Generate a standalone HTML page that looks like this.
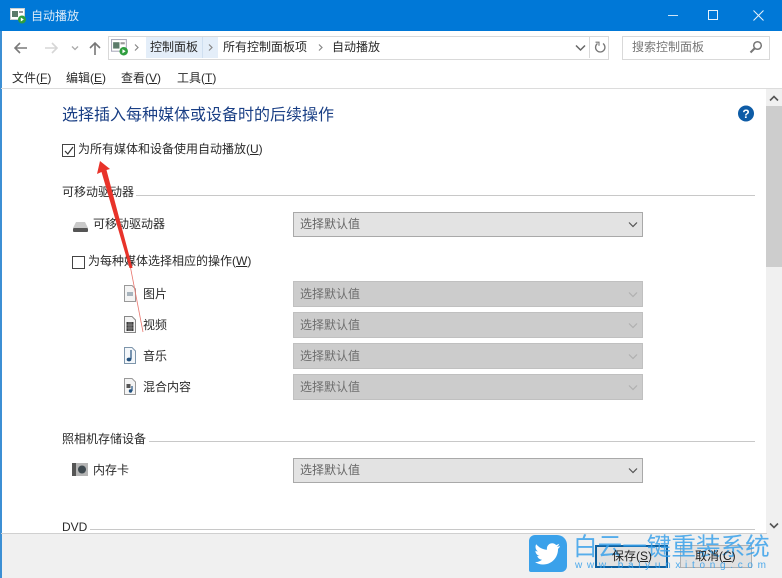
<!DOCTYPE html>
<html lang="zh">
<head>
<meta charset="utf-8">
<style>
html,body{margin:0;padding:0;background:#fff}
#r{position:relative;width:782px;height:578px;overflow:hidden;background:#fff;font-family:"Liberation Sans","Noto Sans CJK SC",sans-serif;font-size:12px;color:#2a2a2a}
#r div,#r span.a,#r svg{position:absolute}
.t{white-space:nowrap;line-height:16px}
.u{text-decoration:underline}
.sel{left:293px;width:348px;border:1px solid #a9a9a9;background:#e3e3e3;color:#666;height:23px;line-height:23px;text-indent:6px}
.dis{background:#cccccc;border-color:#c0c0c0;color:#6d6d6d;height:24px;line-height:24px}
.hr{height:1px;background:#c8c8c8}
</style>
</head>
<body>
<div id="r">
<div style="left:0;top:0;width:782px;height:31px;background:#0078d7"></div>
<div style="left:0;top:31px;width:1.5px;height:547px;background:#3c8fd4"></div>
<svg style="left:10px;top:8px" width="17" height="16" viewBox="0 0 17 16"><rect x="0.5" y="0.5" width="14" height="11" fill="#fff" stroke="#c8d0d0"/><rect x="2" y="3" width="6" height="6" fill="#5a7a6a"/><rect x="9" y="3" width="4" height="2" fill="#999"/><circle cx="12" cy="11.5" r="4" fill="#2f9e3f"/><path d="M10.8 9.5l3 2-3 2z" fill="#fff"/></svg>
<div class="t" style="left:31px;top:8px;color:#dcebf8;font-size:12px">自动播放</div>
<div style="left:668px;top:15px;width:10px;height:1px;background:#cfe4f6"></div>
<div style="left:708px;top:10px;width:8px;height:8px;border:1px solid #e6f1fa"></div>
<svg style="left:753px;top:10px" width="11" height="11"><path d="M0.5 0.5L10.5 10.5M10.5 0.5L0.5 10.5" stroke="#e6f1fa" stroke-width="1"/></svg>

<svg style="left:14px;top:40px" width="100" height="16" viewBox="0 0 100 16" fill="none"><path d="M1 8H13M6 3L1 8L6 13" stroke="#7a7a7a" stroke-width="1.6"/><path d="M31 8H43M38 3L43 8L38 13" stroke="#d6d6d6" stroke-width="1.6"/><path d="M58 6.5L61 9.5L64 6.5" stroke="#aaa" stroke-width="1.3"/><path d="M81 15V3M76 8L81 3L86 8" stroke="#777" stroke-width="1.6"/></svg>

<div style="left:108px;top:36px;width:111px;height:22px;border:1px solid #d9d9d9;border-right:0"></div>
<div style="left:146px;top:37px;width:72px;height:21px;background:#e4eef9"></div>
<div style="left:202px;top:37px;width:1px;height:21px;background:#cfdff0"></div>
<div style="left:219px;top:36px;width:389px;height:22px;border:1px solid #d9d9d9;border-left:0"></div>
<div style="left:589px;top:36px;width:1px;height:22px;background:#d9d9d9"></div>
<svg style="left:111px;top:39px" width="18" height="17" viewBox="0 0 17 16"><rect x="0.5" y="0.5" width="14" height="11" fill="#fff" stroke="#aab"/><rect x="2" y="3" width="6" height="6" fill="#5a7a6a"/><rect x="9" y="3" width="4" height="2" fill="#999"/><circle cx="12" cy="11.5" r="4" fill="#2f9e3f"/><path d="M10.8 9.5l3 2-3 2z" fill="#fff"/></svg>
<svg style="left:134px;top:43px" width="190" height="9" fill="none" stroke="#888" stroke-width="1.2"><path d="M1 1.5L4 4.5L1 7.5"/><path d="M75 1.5L78 4.5L75 7.5"/><path d="M185 1.5L188 4.5L185 7.5"/></svg>
<div class="t" style="left:150px;top:39px">控制面板</div>
<div class="t" style="left:223px;top:39px">所有控制面板项</div>
<div class="t" style="left:332px;top:39px">自动播放</div>
<svg style="left:575px;top:44px" width="11" height="8" fill="none"><path d="M1 1.5L5.5 6L10 1.5" stroke="#666" stroke-width="1.5"/></svg>
<svg style="left:594px;top:41px" width="13" height="13" viewBox="0 0 13 13" fill="none"><path d="M3.5 2.5A4.7 4.7 0 1 0 9 2.5" stroke="#777" stroke-width="1.3"/><path d="M1.5 1.2H5V4.8" stroke="#777" stroke-width="1.1"/></svg>
<div style="left:622px;top:36px;width:146px;height:22px;border:1px solid #d9d9d9"></div>
<div class="t" style="left:632px;top:39px;color:#777">搜索控制面板</div>
<svg style="left:749px;top:40px" width="14" height="14" fill="none"><circle cx="8.5" cy="5.5" r="3.8" stroke="#777" stroke-width="1.5"/><path d="M6 8L1.5 12.5" stroke="#777" stroke-width="2"/></svg>

<div class="t" style="left:12px;top:70px">文件(<span class="u">F</span>)</div>
<div class="t" style="left:66px;top:70px">编辑(<span class="u">E</span>)</div>
<div class="t" style="left:121px;top:70px">查看(<span class="u">V</span>)</div>
<div class="t" style="left:177px;top:70px">工具(<span class="u">T</span>)</div>
<div class="hr" style="left:1px;top:88px;width:781px;background:#dcdcdc"></div>

<div class="t" style="left:62px;top:106px;font-size:16px;line-height:20px;color:#1a3f85">选择插入每种媒体或设备时的后续操作</div>
<svg style="left:738px;top:105px" width="16" height="17"><circle cx="8" cy="8.5" r="8" fill="#0e5ca6"/><text x="8" y="13" text-anchor="middle" font-family="Liberation Sans" font-weight="700" font-size="12" fill="#fff">?</text></svg>

<div style="left:62px;top:144px;width:11px;height:11px;border:1px solid #444;background:#fff"></div>
<svg style="left:63px;top:145px" width="12" height="12" fill="none"><path d="M2 6L4.8 9L10 2" stroke="#333" stroke-width="1.2"/></svg>
<div class="t" style="left:78px;top:141px">为所有媒体和设备使用自动播放(<span class="u">U</span>)</div>

<div class="t" style="left:62px;top:184px">可移动驱动器</div>
<div class="hr" style="left:136px;top:195px;width:619px"></div>
<svg style="left:73px;top:222px" width="15" height="10"><path d="M3 0H12L15 6H0z" fill="#c9c9c9"/><rect x="0" y="6" width="15" height="4" rx="1" fill="#555"/></svg>
<div class="t" style="left:93px;top:216px">可移动驱动器</div>
<div class="sel" style="top:212px">选择默认值</div>

<div style="left:72px;top:256px;width:11px;height:11px;border:1px solid #444;background:#fff"></div>
<div class="t" style="left:88px;top:253px">为每种媒体选择相应的操作(<span class="u">W</span>)</div>

<svg style="left:124px;top:285px" width="12" height="17"><path d="M.5.5H8L11.5 4V16.5H.5z" fill="#f4f4f4" stroke="#999"/><rect x="3" y="7" width="6" height="4" fill="#a8b4bd"/></svg>
<div class="t" style="left:143px;top:286px">图片</div>
<div class="sel dis" style="top:281px">选择默认值</div>

<svg style="left:124px;top:316px" width="12" height="17"><path d="M.5.5H8L11.5 4V16.5H.5z" fill="#f4f4f4" stroke="#888"/><rect x="2.5" y="6" width="7" height="9" fill="#3d3d3d"/><path d="M5 6V15M7 6V15M2.5 9H9.5M2.5 12H9.5" stroke="#aaa" stroke-width=".6"/></svg>
<div class="t" style="left:143px;top:317px">视频</div>
<div class="sel dis" style="top:312px">选择默认值</div>

<svg style="left:124px;top:347px" width="12" height="17"><path d="M.5.5H8L11.5 4V16.5H.5z" fill="#f4f7fa" stroke="#7d95ab"/><path d="M7 3V12" stroke="#24527f" stroke-width="1.2"/><ellipse cx="5" cy="12.5" rx="2.4" ry="1.9" fill="#24527f"/></svg>
<div class="t" style="left:143px;top:348px">音乐</div>
<div class="sel dis" style="top:343px">选择默认值</div>

<svg style="left:124px;top:378px" width="12" height="17"><path d="M.5.5H8L11.5 4V16.5H.5z" fill="#f4f4f4" stroke="#999"/><rect x="2.5" y="6" width="4" height="4" fill="#555"/><path d="M8 8V13" stroke="#24527f" stroke-width="1.2"/><circle cx="6.5" cy="13" r="1.7" fill="#24527f"/></svg>
<div class="t" style="left:143px;top:379px">混合内容</div>
<div class="sel dis" style="top:374px">选择默认值</div>

<svg style="left:628px;top:221px" width="640" height="200" fill="none"><path d="M1 1.5L5 5.5L9 1.5" stroke="#555" stroke-width="1.2"/><path d="M1 71.5L5 75.5L9 71.5" stroke="#b0b0b0" stroke-width="1.2"/><path d="M1 102.5L5 106.5L9 102.5" stroke="#b0b0b0" stroke-width="1.2"/><path d="M1 133.5L5 137.5L9 133.5" stroke="#b0b0b0" stroke-width="1.2"/><path d="M1 164.5L5 168.5L9 164.5" stroke="#b0b0b0" stroke-width="1.2"/></svg>

<div class="t" style="left:62px;top:431px">照相机存储设备</div>
<div class="hr" style="left:149px;top:441px;width:606px"></div>
<svg style="left:72px;top:463px" width="16" height="13"><rect width="16" height="13" fill="#b5b5b5"/><rect width="4" height="13" fill="#555"/><circle cx="10" cy="6.5" r="4" fill="#3f4a50"/></svg>
<div class="t" style="left:93px;top:462px">内存卡</div>
<div class="sel" style="top:458px">选择默认值</div>
<svg style="left:628px;top:467px" width="12" height="8" fill="none"><path d="M1 1.5L5 5.5L9 1.5" stroke="#555" stroke-width="1.2"/></svg>

<div class="t" style="left:62px;top:519px">DVD</div>
<div class="hr" style="left:90px;top:529px;width:665px"></div>

<div style="left:766px;top:89px;width:16px;height:444px;background:#f0f0f0"></div>
<div style="left:766px;top:106px;width:16px;height:161px;background:#cdcdcd"></div>
<svg style="left:769px;top:95px" width="10" height="7" fill="none"><path d="M1 5.5L5 1.5L9 5.5" stroke="#555" stroke-width="1.6"/></svg>
<svg style="left:769px;top:522px" width="10" height="7" fill="none"><path d="M1 1.5L5 5.5L9 1.5" stroke="#555" stroke-width="1.6"/></svg>

<div style="left:1.5px;top:533px;width:781px;height:45px;background:#f0f0f0"></div>
<div class="hr" style="left:1px;top:533px;width:766px;background:#d0d0d0"></div>

<div style="left:595px;top:545px;width:69px;height:19px;border:2px solid #0c5f9f;background:#e1e1e1"></div>
<div style="left:680px;top:545px;width:70px;height:21px;border:1px solid #b0b0b0;background:#e1e1e1"></div>

<div style="left:529px;top:535px;width:38px;height:37px;background:#3aa1ea;border-radius:6px 10px 6px 2px"></div>
<svg style="left:535px;top:543px" width="26" height="22" viewBox="0 0 26 22"><path d="M25 3c-1 .5-2 .7-3 .8 1-.7 1.9-1.7 2.3-3-1 .6-2 1-3.2 1.3C20.1 1 18.700.3 17.200.3c-2.900 0-5.300 2.400-5.300 5.300 0 .4 0 .8.100 1.200C7.700 6.600 3.800 4.500 1.200 1.300.7 2.100.5 3 .5 4c0 1.800.9 3.400 2.300 4.400-.9 0-1.700-.3-2.400-.7 0 2.600 1.800 4.700 4.200 5.200-.8.200-1.600.2-2.400.1.700 2.100 2.600 3.600 4.900 3.700C4.800 18.400 2.400 19.300 0 19.100c2.300 1.500 5.100 2.400 8 2.400 9.700 0 15-8 15-15v-.7c1-.7 1.900-1.700 2-2.800z" fill="#fff"/></svg>
<div class="t" style="left:573px;top:532px;font-size:24.6px;line-height:32px;color:rgba(58,161,234,.85)">白云一键重装系统</div>
<div class="t" style="left:575px;top:560px;font-size:10px;line-height:12px;letter-spacing:4.7px;color:rgba(58,161,234,.9)">www.baiyunxitong.com</div>

<div class="t" style="left:612px;top:548px;color:#222">保存(<span class="u">S</span>)</div>
<div class="t" style="left:695px;top:548px;color:#222">取消(<span class="u">C</span>)</div>

<svg style="left:0;top:0" width="782" height="578"><path d="M130 265L143 332" stroke="#e8776f" stroke-width="0.8" fill="none"/><path d="M100 161L110 169L106.500 170L132.500 268L129.500 268L101.500 172L97 174z" fill="#e8332a"/></svg>
</div>
</body>
</html>
